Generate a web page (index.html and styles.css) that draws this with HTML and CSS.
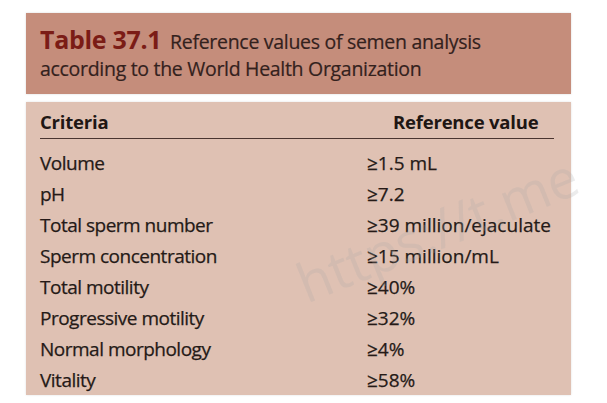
FILE: index.html
```html
<!DOCTYPE html>
<html lang="en">
<head>
<meta charset="utf-8">
<title>Table 37.1</title>
<link rel="stylesheet" href="styles.css">
</head>
<body>
<div class="page">
  <div class="card">
    <div class="caption">
      <div class="line"><span class="num">Table 37.1</span> Reference values of semen analysis</div>
      <div class="line">according to the World Health Organization</div>
    </div>
    <div class="table">
      <div class="head">
        <span class="col1">Criteria</span>
        <span class="col2">Reference value</span>
      </div>
      <div class="rows">
        <div class="row"><span>Volume</span><span class="val">≥1.5 mL</span></div>
        <div class="row"><span>pH</span><span class="val">≥7.2</span></div>
        <div class="row"><span>Total sperm number</span><span class="val">≥39 million/ejaculate</span></div>
        <div class="row"><span>Sperm concentration</span><span class="val">≥15 million/mL</span></div>
        <div class="row"><span>Total motility</span><span class="val">≥40%</span></div>
        <div class="row"><span>Progressive motility</span><span class="val">≥32%</span></div>
        <div class="row"><span>Normal morphology</span><span class="val">≥4%</span></div>
        <div class="row"><span>Vitality</span><span class="val">≥58%</span></div>
      </div>
    </div>
  </div>
  <span class="wm wm1">https://t.me</span>
</div>
</body>
</html>
```
FILE: styles.css
```css
html, body {
  margin: 0;
  padding: 0;
  background: #ffffff;
}
.page {
  position: relative;
  width: 607px;
  height: 403px;
  overflow: hidden;
  padding: 13px 0 0 26px;
  box-sizing: border-box;
  font-family: "Open Sans", "Noto Sans", sans-serif;
  color: #251a17;
}
.card {
  width: 545px;
  display: flex;
  flex-direction: column;
  gap: 8px;
}
.caption {
  background: #c58d7b;
  height: 81px;
  box-sizing: border-box;
  padding: 13px 14px 0 14px;
  box-shadow: 0 0 2px rgba(0,0,0,0.15);
}
.caption .line {
  font-size: 19.5px;
  line-height: 27px;
  letter-spacing: -0.3px;
  white-space: nowrap;
  color: #33211d;
  -webkit-text-stroke: 0.2px #33211d;
}
.caption .num {
  font-size: 25px;
  font-weight: 700;
  color: #7b1c16;
  -webkit-text-stroke: 0;
  letter-spacing: -0.3px;
  margin-right: 4px;
}
.table {
  background: #dfc1b3;
  height: 293px;
  box-sizing: border-box;
  padding: 8px 17px 0 14px;
  box-shadow: 0 0 2px rgba(0,0,0,0.12);
}
.head {
  display: grid;
  grid-template-columns: 353px 1fr;
  font-weight: 700;
  font-size: 18.5px;
  line-height: 24px;
  letter-spacing: -0.2px;
  padding-bottom: 4px;
  border-bottom: 1.5px solid #4a3530;
  color: #201614;
}
.rows {
  padding-top: 9px;
}
.row {
  display: grid;
  grid-template-columns: 327px 1fr;
  font-size: 19px;
  line-height: 31px;
  letter-spacing: -0.5px;
  white-space: nowrap;
  -webkit-text-stroke: 0.25px #251a17;
}
.row .val {
  letter-spacing: 0;
}
.wm {
  position: absolute;
  font-family: "Open Sans", sans-serif;
  color: rgba(170, 170, 170, 0.22);
  font-size: 54px;
  white-space: nowrap;
  pointer-events: none;
}
.wm1 {
  left: 285px;
  top: 250px;
  transform: rotate(-22deg);
  transform-origin: left top;
}
```
